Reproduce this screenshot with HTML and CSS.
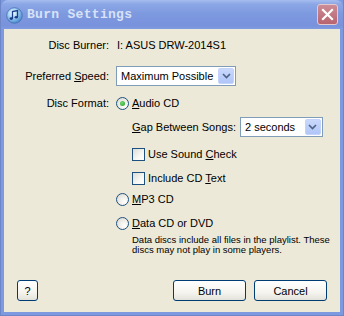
FILE: index.html
```html
<!DOCTYPE html>
<html lang="en">
<head>
    <meta charset="UTF-8">
    <title>Burn Settings</title>
    <link rel="stylesheet" href="styles.css">
</head>
<body>
    <div class="window">
        <div class="titlebar">
            <svg class="app-icon" width="17" height="17" viewBox="0 0 17 17">
                <defs>
                    <radialGradient id="disc" cx="40%" cy="35%" r="70%">
                        <stop offset="0" stop-color="#ffffff"/>
                        <stop offset="0.45" stop-color="#9fd0f5"/>
                        <stop offset="1" stop-color="#3a7fc8"/>
                    </radialGradient>
                </defs>
                <circle cx="8.5" cy="8.5" r="7.8" fill="url(#disc)" stroke="#4a6fb0" stroke-width="0.8"/>
                <path d="M6.5 11.5 V4.5 L11.5 3.5 V10" fill="none" stroke="#1d3f8a" stroke-width="1.3"/>
                <ellipse cx="5.3" cy="11.6" rx="1.7" ry="1.3" fill="#1d3f8a"/>
                <ellipse cx="10.3" cy="10.2" rx="1.7" ry="1.3" fill="#1d3f8a"/>
            </svg>
            <span class="title">Burn Settings</span>
            <div class="close-btn">
                <svg width="21" height="21" viewBox="0 0 21 21">
                    <path d="M6 6 L15 15 M15 6 L6 15" stroke="#fff" stroke-width="2.2" stroke-linecap="square"/>
                </svg>
            </div>
        </div>
        <div class="content">
            <div class="row r1">
                <span class="label">Disc Burner:</span>
                <span class="value">I: ASUS DRW-2014S1</span>
            </div>
            <div class="row r2">
                <span class="label">Preferred <u>S</u>peed:</span>
                <div class="select speed">
                    <span class="select-text">Maximum Possible</span>
                    <span class="drop"><svg width="9" height="6" viewBox="0 0 9 6"><path d="M1 1 L4.5 4.5 L8 1" fill="none" stroke="#4d6185" stroke-width="1.6"/></svg></span>
                </div>
            </div>
            <div class="row r3">
                <span class="label">Disc Format:</span>
                <span class="radio checked"></span>
                <span class="opt"><u>A</u>udio CD</span>
            </div>
            <div class="row r4 sub">
                <span class="opt"><u>G</u>ap Between Songs:</span>
                <div class="select gap">
                    <span class="select-text">2 seconds</span>
                    <span class="drop"><svg width="9" height="6" viewBox="0 0 9 6"><path d="M1 1 L4.5 4.5 L8 1" fill="none" stroke="#4d6185" stroke-width="1.6"/></svg></span>
                </div>
            </div>
            <div class="row r5 sub">
                <span class="check"></span>
                <span class="opt">Use Sound <u>C</u>heck</span>
            </div>
            <div class="row r6 sub">
                <span class="check"></span>
                <span class="opt">Include CD <u>T</u>ext</span>
            </div>
            <div class="row r7 indent">
                <span class="radio"></span>
                <span class="opt"><u>M</u>P3 CD</span>
            </div>
            <div class="row r8 indent">
                <span class="radio"></span>
                <span class="opt"><u>D</u>ata CD or DVD</span>
            </div>
            <p class="note">Data discs include all files in the playlist. These<br>discs may not play in some players.</p>
            <div class="buttons">
                <button class="btn help">?</button>
                <span class="spacer"></span>
                <button class="btn">Burn</button>
                <button class="btn">Cancel</button>
            </div>
        </div>
    </div>
</body>
</html>
```

FILE: styles.css
```css
body {
    margin: 0;
    padding: 0;
    font-family: "Liberation Sans", Arial, sans-serif;
    font-size: 11px;
    color: #000;
}

.window {
    width: 344px;
    height: 316px;
    box-sizing: border-box;
    background-color: #7d99df;
    border: 1px solid #6c86c8;
    border-top: none;
    display: flex;
    flex-direction: column;
}

.titlebar {
    height: 29px;
    display: flex;
    align-items: center;
    padding: 0 4px 0 4px;
    background: linear-gradient(#a6bdf0 0, #8ca7e6 4px, #7d99df 14px, #7893dc 26px, #7f9be0 29px);
    border-radius: 7px 7px 0 0;
    flex-shrink: 0;
}

.app-icon {
    margin-left: 1px;
    margin-top: 1px;
}

.title {
    margin-left: 4px;
    font-family: "Liberation Mono", "DejaVu Sans Mono", monospace;
    font-weight: bold;
    font-size: 13px;
    color: #d8e2f7;
    letter-spacing: 0.3px;
}

.close-btn {
    margin-left: auto;
    margin-right: 1px;
    width: 21px;
    height: 21px;
    box-sizing: border-box;
    border: 1px solid #e6c9cf;
    border-radius: 3px;
    background: linear-gradient(#cc8d96, #b8646f);
    display: flex;
    align-items: center;
    justify-content: center;
}

.close-btn svg {
    display: block;
    margin: -1px;
}

.content {
    flex: 1;
    margin: 0 3px 3px 3px;
    background-color: #ece9d8;
    padding-top: 6px;
    display: flex;
    flex-direction: column;
}

.row {
    display: flex;
    align-items: center;
    height: 20px;
}

.label {
    width: 105px;
    text-align: right;
    margin-right: 7px;
    flex-shrink: 0;
}

.value {
    margin-left: 1px;
}

.r2 { margin-top: 11px; }
.r3 { margin-top: 7px; }
.r4 { margin-top: 4px; }
.r5 { margin-top: 7px; }
.r6 { margin-top: 4px; }
.r7 { margin-top: 1px; }
.r8 { margin-top: 4px; }

.sub {
    padding-left: 128px;
}

.indent {
    padding-left: 112px;
}

.select {
    height: 20px;
    box-sizing: border-box;
    border: 1px solid #7f9db9;
    background: #fff;
    display: flex;
    align-items: center;
    padding: 1px;
    flex-shrink: 0;
}

.select-text {
    flex: 1;
    padding-left: 3px;
    font-size: 11px;
    white-space: nowrap;
    overflow: hidden;
}

.speed {
    width: 120px;
}

.gap {
    width: 83px;
    margin-left: 4px;
}

.drop {
    width: 16px;
    height: 16px;
    box-sizing: border-box;
    border: 1px solid #c3d3fd;
    border-radius: 2px;
    background: linear-gradient(#c9d8fc, #b0c6f7);
    display: flex;
    align-items: center;
    justify-content: center;
}

.drop svg {
    display: block;
}

.radio {
    width: 13px;
    height: 13px;
    box-sizing: border-box;
    border-radius: 50%;
    border: 1px solid #1c5180;
    background: radial-gradient(circle at 70% 70%, #ffffff 0, #f2f1ec 40%, #d5d4cc 100%);
    position: relative;
    flex-shrink: 0;
}

.radio.checked::after {
    content: "";
    position: absolute;
    left: 3px;
    top: 3px;
    width: 5px;
    height: 5px;
    border-radius: 50%;
    background: radial-gradient(circle at 40% 35%, #74d874, #21a121);
}

.check {
    width: 13px;
    height: 13px;
    box-sizing: border-box;
    border: 1px solid #1c5180;
    background: linear-gradient(135deg, #dcdcd7 0, #f7f7f5 60%, #ffffff 100%);
    flex-shrink: 0;
}

.opt {
    margin-left: 3px;
    white-space: nowrap;
}

.sub .opt:first-child {
    margin-left: 0;
}

.note {
    margin: 2px 0 0 128px;
    font-size: 9.5px;
    line-height: 10px;
    white-space: nowrap;
}

.buttons {
    margin-top: auto;
    display: flex;
    padding: 0 13px 11px 13px;
    gap: 8px;
}

.spacer {
    flex: 1;
}

.btn {
    height: 21px;
    width: 73px;
    border: 1px solid #003c74;
    border-radius: 3px;
    background: linear-gradient(#ffffff 0, #f5f4ef 60%, #e3e2da 100%);
    font-family: "Liberation Sans", Arial, sans-serif;
    font-size: 11px;
    color: #000;
    padding: 0;
}

.btn.help {
    width: 21px;
}
```
